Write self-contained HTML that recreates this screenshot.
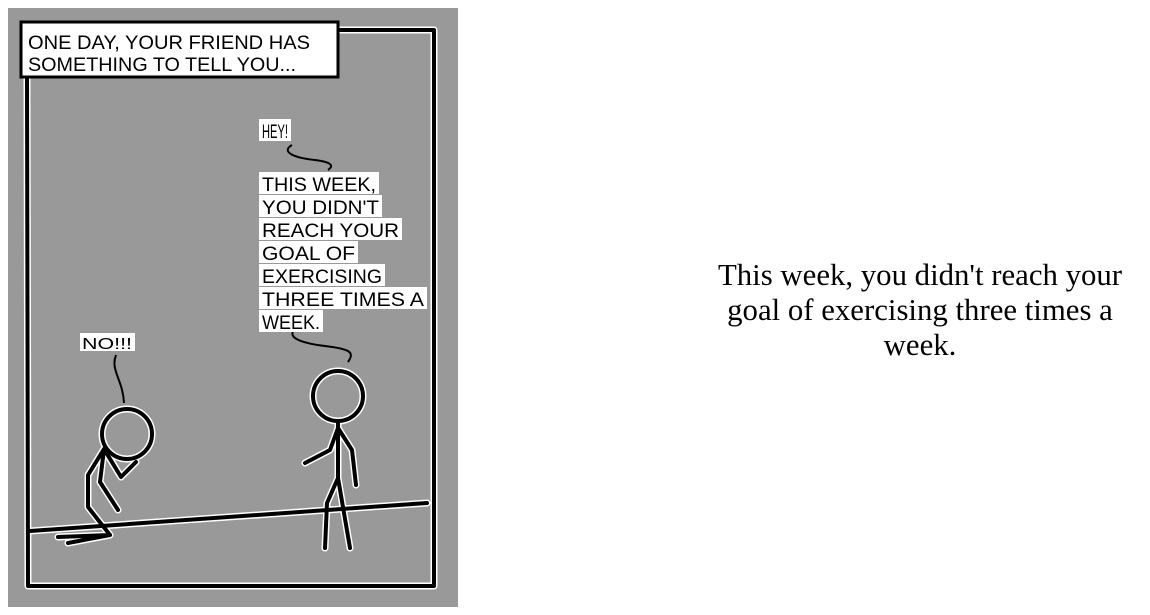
<!DOCTYPE html>
<html><head><style>
html,body{margin:0;padding:0;background:#fff;width:1150px;height:615px;overflow:hidden}
svg{position:absolute;left:0;top:0}
.t{position:absolute;left:700px;top:258px;width:440px;text-align:center;font-family:"Liberation Serif",serif;font-size:30.8px;line-height:35px;color:#000}
</style></head><body>
<svg width="470" height="615" viewBox="0 0 470 615">
<rect x="8" y="8" width="450" height="599" fill="#999"/>
<g stroke="#fff" stroke-width="7" fill="none" stroke-linecap="round" stroke-linejoin="round">
<path d="M27 78 L28 586 L434 586 L434 30 L340 30"/>
<path d="M30 531 L427 503"/>
<circle cx="338" cy="396" r="25"/><circle cx="127" cy="434" r="25"/>
<path d="M338 422 L338 478 M338 478 L327 503 L325 548 M338 478 L350 548 M338 428 L330 450 L305 463 M338 428 L352 450 L356 485"/>
<path d="M104 449 L88 475 L88 507 L110 535 L58 537 M110 535 L68 543 M104 449 L100 482 L118 510 M104 449 L121 477 L136 462"/>
</g>
<g stroke="#000" stroke-width="4" fill="none" stroke-linecap="round" stroke-linejoin="round">
<path d="M27 78 L28 586 L434 586 L434 30 L340 30"/>
<path d="M30 531 L427 503"/>
<circle cx="338" cy="396" r="25"/><circle cx="127" cy="434" r="25"/>
<path d="M338 422 L338 478 M338 478 L327 503 L325 548 M338 478 L350 548 M338 428 L330 450 L305 463 M338 428 L352 450 L356 485"/>
<path d="M104 449 L88 475 L88 507 L110 535 L58 537 M110 535 L68 543 M104 449 L100 482 L118 510 M104 449 L121 477 L136 462"/>
</g>
<g stroke="#000" stroke-width="2" fill="none">
<path d="M292 145 C280 152 295 158 315 160 C330 162 335 165 328 170"/>
<path d="M296 328 C285 337 300 343 325 346 C350 349 355 352 348 362"/>
<path d="M116 355 C110 370 123 380 124 403"/>
</g>
<rect x="21" y="22" width="317" height="55" fill="#fff" stroke="#000" stroke-width="3"/>
<g font-family="Liberation Sans, sans-serif" font-size="19" fill="#000">
<text x="28" y="49" textLength="282" lengthAdjust="spacingAndGlyphs">ONE DAY, YOUR FRIEND HAS</text>
<text x="28" y="71" textLength="268" lengthAdjust="spacingAndGlyphs">SOMETHING TO TELL YOU...</text>
</g>
<g fill="#fff">
<rect x="259" y="119" width="32" height="22"/>
<rect x="80" y="333" width="55" height="18"/>
<rect x="259" y="172" width="120" height="22"/>
<rect x="259" y="195" width="123" height="22"/>
<rect x="259" y="218" width="143" height="22"/>
<rect x="259" y="241" width="99" height="22"/>
<rect x="259" y="264" width="126" height="22"/>
<rect x="259" y="287" width="168" height="22"/>
<rect x="259" y="310" width="64" height="22"/>
</g>
<g font-family="Liberation Sans, sans-serif" font-size="19" fill="#000">
<text x="262" y="138" textLength="26" lengthAdjust="spacingAndGlyphs">HEY!</text>
<text x="82" y="349" font-size="16" textLength="50" lengthAdjust="spacingAndGlyphs">NO!!!</text>
<text x="262" y="191" textLength="114" lengthAdjust="spacingAndGlyphs">THIS WEEK,</text>
<text x="262" y="214" textLength="117" lengthAdjust="spacingAndGlyphs">YOU DIDN'T</text>
<text x="262" y="237" textLength="137" lengthAdjust="spacingAndGlyphs">REACH YOUR</text>
<text x="262" y="260" textLength="93" lengthAdjust="spacingAndGlyphs">GOAL OF</text>
<text x="262" y="283" textLength="120" lengthAdjust="spacingAndGlyphs">EXERCISING</text>
<text x="262" y="306" textLength="162" lengthAdjust="spacingAndGlyphs">THREE TIMES A</text>
<text x="262" y="329" textLength="58" lengthAdjust="spacingAndGlyphs">WEEK.</text>
</g>
</svg>
<div class="t">This week, you didn't reach your goal of exercising three times a week.</div>
</body></html>
